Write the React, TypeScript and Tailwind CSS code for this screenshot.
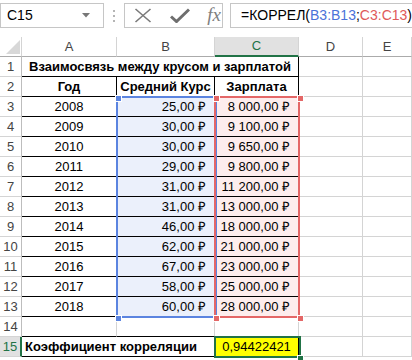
import clsx from 'clsx';
import type { ReactNode } from 'react';

const rows = [
  ['2008', '25,00 ₽', '8 000,00 ₽'],
  ['2009', '30,00 ₽', '9 100,00 ₽'],
  ['2010', '30,00 ₽', '9 650,00 ₽'],
  ['2011', '29,00 ₽', '9 800,00 ₽'],
  ['2012', '31,00 ₽', '11 200,00 ₽'],
  ['2013', '31,00 ₽', '13 000,00 ₽'],
  ['2014', '46,00 ₽', '18 000,00 ₽'],
  ['2015', '62,00 ₽', '21 000,00 ₽'],
  ['2016', '67,00 ₽', '23 000,00 ₽'],
  ['2017', '58,00 ₽', '25 000,00 ₽'],
  ['2018', '60,00 ₽', '28 000,00 ₽'],
];

const nb = (s: string) => s.replace(/ /g, '\u00a0');

interface CellProps {
  r?: 'g' | 'k';
  b?: 'g' | 'k';
  className?: string;
  children?: ReactNode;
}

function Cell({ r = 'g', b = 'g', className, children }: CellProps) {
  return (
    <div
      className={clsx(
        'h-5 border-r border-b flex items-center whitespace-nowrap overflow-visible',
        r === 'k' ? 'border-r-black' : 'border-r-[#d4d4d4]',
        b === 'k' ? 'border-b-black' : 'border-b-[#d4d4d4]',
        className
      )}
    >
      {children}
    </div>
  );
}

function RowHead({ n, active }: { n: number; active?: boolean }) {
  return (
    <div
      className={clsx(
        'h-5 flex items-center justify-center border-b border-b-[#d4d4d4]',
        active
          ? 'bg-[#e1e1e1] text-[#217346] border-r-2 border-r-[#217346]'
          : 'text-[#444] border-r border-r-[#bdbdbd]'
      )}
    >
      {n}
    </div>
  );
}

function Handle({ x, y, color }: { x: number; y: number; color: string }) {
  return (
    <div
      className="absolute w-[5px] h-[5px] border border-white"
      style={{ left: x - 2, top: y - 2, background: color, boxSizing: 'content-box' }}
    />
  );
}

export default function App() {
  return (
    <div className="w-[412px] h-[360px] overflow-hidden bg-white font-['Liberation_Sans',Arial,sans-serif] text-[13px] text-black">
      {/* Formula bar */}
      <div className="h-[37px] flex items-start pt-[3px]">
        <div className="w-[111px] h-[25px] border border-[#c6c6c6] flex items-center justify-between pl-[6px] pr-[13px] text-[14px]">
          <span>C15</span>
          <svg width="8" height="5" viewBox="0 0 8 5">
            <path d="M0 0h8L4 4.5z" fill="#777" />
          </svg>
        </div>
        <div className="w-[22px] h-[25px] flex flex-col items-center justify-center gap-[3px]">
          <span className="w-[2px] h-[2px] bg-[#b5b5b5]" />
          <span className="w-[2px] h-[2px] bg-[#b5b5b5]" />
          <span className="w-[2px] h-[2px] bg-[#b5b5b5]" />
        </div>
        <div className="w-[107px] h-[25px] border border-[#c6c6c6] flex items-center">
          <svg className="ml-[9px]" width="18" height="15" viewBox="0 0 18 15">
            <path d="M1.5 1L16.5 14M16.5 1L1.5 14" stroke="#7a7a7a" strokeWidth="1.6" fill="none" />
          </svg>
          <svg className="ml-[18px]" width="20" height="15" viewBox="0 0 20 15">
            <path d="M1 8.5L6.5 13.5L19 1.5" stroke="#6e6e6e" strokeWidth="3" fill="none" />
          </svg>
          <span className="ml-[17px] font-['Liberation_Serif',serif] italic text-[19px] text-[#808080] leading-none -mt-[2px]">
            fx
          </span>
        </div>
        <div className="ml-[7px] flex-1 h-[25px] border border-r-0 border-[#c6c6c6] flex items-center pl-[10px] text-[14px]">
          <span>=КОРРЕЛ(</span>
          <span className="text-[#4a72d9]">B3:B13</span>
          <span>;</span>
          <span className="text-[#e05a5a]">C3:C13</span>
          <span>)</span>
        </div>
      </div>

      {/* Sheet */}
      <div className="relative grid grid-cols-[22px_95px_98px_84px_64px_49px]">
        {/* Column headers */}
        <div className="h-5 border-r border-r-[#d4d4d4] border-b border-b-[#ababab] flex items-end justify-end pr-[1px] pb-[2px]">
          <svg width="14" height="14" viewBox="0 0 14 14">
            <path d="M14 0V14H0z" fill="#d8d8d8" />
          </svg>
        </div>
        <div className="h-5 border-r border-r-[#d4d4d4] border-b border-b-[#ababab] flex items-center justify-center text-[#444]">A</div>
        <div className="h-5 border-r border-r-[#d4d4d4] border-b border-b-[#ababab] flex items-center justify-center text-[#444]">B</div>
        <div className="h-5 border-r border-r-[#d4d4d4] border-b-2 border-b-[#217346] bg-[#e1e1e1] flex items-center justify-center text-[#217346]">C</div>
        <div className="h-5 border-r border-r-[#d4d4d4] border-b border-b-[#ababab] flex items-center justify-center text-[#444]">D</div>
        <div className="h-5 border-r border-r-[#d4d4d4] border-b border-b-[#ababab] flex items-center justify-center text-[#444]">E</div>

        {/* Row 1 */}
        <RowHead n={1} />
        <Cell r="k" b="k" className="col-span-3 justify-center font-bold">
          Взаимосвязь между крусом и зарплатой
        </Cell>
        <Cell />
        <Cell />

        {/* Row 2 */}
        <RowHead n={2} />
        <Cell r="k" b="k" className="justify-center font-bold">Год</Cell>
        <Cell r="k" b="k" className="justify-center font-bold">Средний Курс</Cell>
        <Cell r="k" b="k" className="justify-center font-bold">Зарплата</Cell>
        <Cell />
        <Cell />

        {/* Rows 3-13 */}
        {rows.map(([year, rate, pay], i) => (
          <div key={year} className="contents">
            <RowHead n={i + 3} />
            <Cell r="k" b="k" className="justify-center">{year}</Cell>
            <Cell r="k" b="k" className="justify-end pr-2 bg-[#ebf0fb]">{nb(rate)}</Cell>
            <Cell r="k" b="k" className="justify-end pr-2 bg-[#fdeded]">{nb(pay)}</Cell>
            <Cell />
            <Cell />
          </div>
        ))}

        {/* Row 14 */}
        <RowHead n={14} />
        <Cell b="k" />
        <Cell b="k" />
        <Cell b="k" />
        <Cell />
        <Cell />

        {/* Row 15 */}
        <RowHead n={15} active />
        <Cell r="k" b="k" className="col-span-2 pl-[3px] font-bold">Коэффициент корреляции</Cell>
        <Cell r="k" b="k" className="justify-center bg-[#ffff00]">0,94422421</Cell>
        <Cell />
        <Cell />

        {/* Formula range highlights */}
        <div className="absolute left-[116px] top-[59px] w-[101px] h-[222px] border-2 border-[#5b84e0]" />
        <div className="absolute left-[214px] top-[59px] w-[86px] h-[222px] border-2 border-[#e46767]" />
        <Handle x={117} y={60} color="#5b84e0" />
        <Handle x={117} y={280} color="#5b84e0" />
        <Handle x={215} y={60} color="#e46767" />
        <Handle x={299} y={60} color="#e46767" />
        <Handle x={215} y={280} color="#e46767" />
        <Handle x={299} y={280} color="#e46767" />

        {/* Active cell C15 */}
        <div className="absolute left-[214px] top-[299px] w-[87px] h-[22px] border-2 border-[#217346]" />
        <Handle x={299} y={320} color="#217346" />
      </div>
    </div>
  );
}
